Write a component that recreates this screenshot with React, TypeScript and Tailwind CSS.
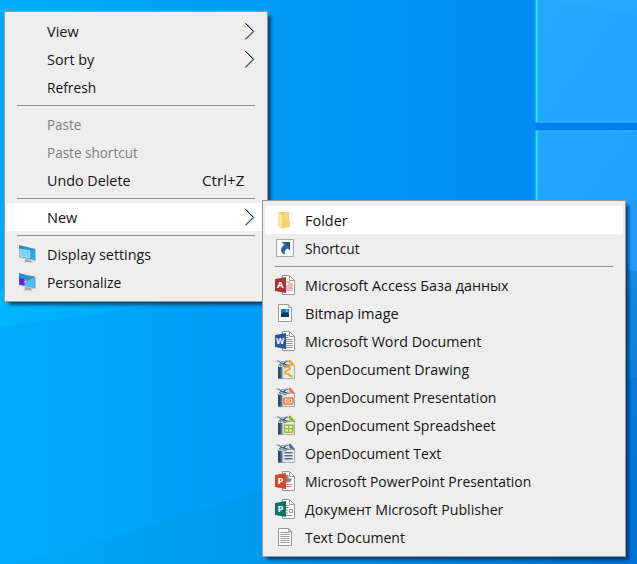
import { useLayoutEffect, useRef, useState, type ReactNode } from "react";

function Label({ text, width }: { text: string; width: number }) {
  const ref = useRef<HTMLSpanElement>(null);
  const [scale, setScale] = useState(1);
  useLayoutEffect(() => {
    if (ref.current) setScale(width / ref.current.offsetWidth);
  }, [width, text]);
  return (
    <span ref={ref} className="inline-block origin-left whitespace-nowrap" style={{ transform: `scaleX(${scale})` }}>
      {text}
    </span>
  );
}

function Row({ text, width, icon, active, disabled, children }: {
  text: string; width: number; icon?: ReactNode; active?: boolean; disabled?: boolean; children?: ReactNode;
}) {
  return (
    <div className={`mx-[2px] flex h-7 items-center pl-[10px] ${active ? "bg-white" : ""} ${disabled ? "text-[#808080]" : "text-[#151515]"}`}>
      <div className="mr-[10px] size-5 shrink-0">{icon}</div>
      <div className="flex-1"><Label text={text} width={width} /></div>
      {children}
    </div>
  );
}

const Separator = () => <div className="mx-3 mt-1 mb-1 h-px bg-[#919191]" />;

const Arrow = () => (
  <svg className="mr-[9px] h-[19px] w-3 shrink-0" viewBox="0 0 12 19" fill="none">
    <path d="M1.8 3.5l5.7 5.8-5.7 5.8" stroke="#fbf3c8" strokeWidth="1.4" />
    <path d="M2 1.2l8.1 8.1L2 17.4" stroke="#3c9be4" strokeWidth="1" />
    <path d="M1.3 1.3l8 8-8 8" stroke="#1b1424" strokeWidth="1" />
  </svg>
);

function Monitor({ paint }: { paint?: boolean }) {
  return (
    <svg viewBox="0 0 20 20" className="size-5">
      <defs>
        <linearGradient id="screen" x1="0" y1="0" x2="1" y2="1"><stop stopColor="#1688d4" /><stop offset="1" stopColor="#20b6f7" /></linearGradient>
      </defs>
      <path d="M8 14.5l6 1.5v1.5l2 .8-3 .9-7-1.2 2-1z" fill="#9ba9b2" />
      <path d="M7 17.6l5 .5 3 .3-3 .6-5-1z" fill="#dbe1e4" />
      <path d="M2 1l16.4 4v12.2L2 13.6z" fill="#6b8797" />
      <path d="M2.4 1.8L17.6 5.6v10L2.4 12.4z" fill="url(#screen)" />
      {paint ? (
        <>
          <path d="M2.4 6.2l4 .6 2 3-1 3.7-5-1.1z" fill="#7418df" />
          <path d="M9 9.2l8.6-4v10.4L7 13.4z" fill="#4cbefa" />
          <path d="M19.3 2.6L9.6 9.4 6 10.4 9 8z" fill="#68727b" />
          <path d="M6 10.2l3-2 1.6 1-2 1.6z" fill="#b8c4cd" />
        </>
      ) : (
        <path d="M2.9 5l9.8 2v6.9l-9.8-2z" fill="#7fcef8" stroke="#c9ecff" strokeWidth=".7" />
      )}
      <path d="M2 13.2l16.2 3.5" stroke="#d5dee3" strokeWidth=".9" />
    </svg>
  );
}

const FolderIcon = () => (
  <svg viewBox="0 0 20 20" className="size-5">
    <path d="M3 2h9v15H4z" fill="#efcb68" />
    <path d="M8 2h6v13h-6z" fill="#f6d779" />
    <path d="M3 2l4 3v14l-4-3z" fill="#ffe7a0" />
    <path d="M7 5v14l6-2h2v-6l-1-1V2h-1v11z" fill="#f5d170" />
  </svg>
);

const ShortcutIcon = () => (
  <svg viewBox="0 0 20 20" className="size-5">
    <path d="M1.5 1.5h17v17h-17z" fill="#f7f8fa" stroke="#a4a9af" />
    <path d="M6.5 4H15v8.6l-2.6-2.2c-2.6 1.5-3.2 3.6-2.2 6.1C5 15 4.6 10.4 9.2 6.8z" fill="#2f62a5" />
    <path d="M9 4h6v6z" fill="#244f8b" />
  </svg>
);

function OfficeIcon({ kind }: { kind: "A" | "W" | "P" | "Pub" }) {
  const color = { A: "#a4373a", W: "#2b579a", P: "#d24726", Pub: "#077568" }[kind];
  return (
    <svg viewBox="0 0 20 20" className="size-5">
      <path d="M7.5 .5h7l5 5v14h-12z" fill="#fff" stroke="#999" />
      <path d="M14.5.5v5h5" fill="none" stroke="#999" />
      {kind === "A" && <path d="M11 7h3v2h3v2h-6M11 13h6v2h-6" fill="none" stroke="#eda0a5" strokeWidth="1.4" />}
      {kind === "W" && <path d="M11 4.5h2.5M11 6.5h2.5M11 8.5h6.5M11 10.5h6.5M11 12.5h6.5M11 14.5h6.5M11 16.5h6.5" stroke="#8793a0" />}
      {kind === "P" && <g fill="#858585"><path d="M11 4h2.5v3.5h3.5c0 2.7-2 4-6 4z" /><path d="M11 13h6v1h-6zm0 2h6v1h-6z" fill="#eb8069" /></g>}
      {kind === "Pub" && <g fill="none" stroke="#8b9696"><path d="M11 6.5h2.5M11 8.5h2.5M11 16.5h6M14.5 10.5h3v3h-3zM11 11.5h2M11 14h2" /></g>}
      <path d="M0 4l11-2v16L0 16z" fill={color} />
      <text x={kind === "W" ? "5.2" : "5.4"} y="13.2" textAnchor="middle" fill="#fff" fontSize={kind === "W" ? "8.5" : "9.5"} fontWeight="700" fontFamily="Open Sans, sans-serif">{kind === "Pub" ? "P" : kind}</text>
    </svg>
  );
}

const ImageIcon = () => (
  <svg viewBox="0 0 20 20" className="size-5">
    <path d="M3.5 1.5h9.8l3.2 3.2v13.8h-13z" fill="#fafafa" stroke="#999" />
    <path d="M13.3 1.5v3.2h3.2" fill="none" stroke="#aaa" />
    <path d="M6 6h8v8H6z" fill="#1478c8" />
    <path d="M6 11l3-2 2 1 1-1 2 2v3H6z" fill="#12345e" />
    <circle cx="11.7" cy="7.8" r="1.2" fill="#55c8ff" />
  </svg>
);

function OpenDocumentIcon({ kind }: { kind: "draw" | "slide" | "sheet" | "text" }) {
  const color = { draw: "#f6a817", slide: "#f27332", sheet: "#86b915", text: "#4c6b85" }[kind];
  return (
    <svg viewBox="0 0 20 20" className="size-5">
      <path d="M5.5 2.5h9.5l4.5 5v12h-14z" fill="#e6ebed" stroke="#a5b0b6" />
      <path d="M3 8h4.5v11.5H3z" fill="#56738c" />
      <path d="M3 8h2.5v11.5H3z" fill="#2c4a66" />
      <path d="M8 7v12" stroke="#b5c3cc" />
      <path d="M14 .8h1.5L19.8 6v1.5L14.5 5z" fill={color} />
      <path d="M.5 2C3 .8 5.5 1.6 7.5 3.8 9.5 1 12.5.4 15 2c-3 0-4.5 1.3-5.5 3.3 2.5-.8 5.5-.3 7.5 1.9-3-1.1-5.5-.3-7 1.3C8 6.2 5.5 6.2 3 8c0-2 1-3 3-3.3C4 3 2.5 2.3.5 2z" fill="#40596c" />
      <path d="M1 2C3 1.2 5.5 2.2 7.5 4M8 4C9.5 1.8 12 1.1 14 1.8M3.5 7C6 5.1 8 5.4 10 7.2c2-1.5 4-1.6 5.5-1" fill="none" stroke="#d3dee4" strokeWidth="1" />
      {kind === "draw" && <path d="M9 9.2c3-2 6-1.8 5.8.2-.2 2-4.8 1.7-4.8 4.2 0 2 2.5.8 3.6 1.5 1.5 1-.5 2.4 4.4 2" fill="none" stroke="#f4a61b" strokeWidth="1.9" />}
      {kind === "slide" && <g fill="none" stroke="#f17835"><rect x="9" y="11" width="9" height="6" rx="1" strokeWidth="1.6" /><path d="M11.5 13h4v2h-4z" /></g>}
      {kind === "sheet" && <g><path d="M9 9.5h9.5V18H9z" fill="#94bd28" /><path d="M10.3 11h2.8v2.1h-2.8zM14.2 11h2.8v2.1h-2.8zM10.3 14.5h2.8v2.1h-2.8zM14.2 14.5h2.8v2.1h-2.8z" fill="#eff3d9" /></g>}
      {kind === "text" && <path d="M9.5 9.8h8M9.5 12.8h8M9.5 15.8h8" stroke="#527089" strokeWidth="1.4" />}
    </svg>
  );
}

const TextIcon = () => (
  <svg viewBox="0 0 20 20" className="size-5">
    <path d="M3.5 1.5h10l3 3v14h-13z" fill="#fafafa" stroke="#969696" />
    <path d="M13.5 1.5v3h3M5.5 5.5h9M5.5 7.5h9M5.5 9.5h9M5.5 11.5h9M5.5 13.5h9M5.5 15.5h9" fill="none" stroke="#a0a0a0" />
  </svg>
);

const Wallpaper = () => (
  <svg className="absolute inset-0" width="637" height="564" viewBox="0 0 637 564">
    <defs>
      <linearGradient id="sky"><stop stopColor="#00adfd" /><stop offset=".41" stopColor="#009cf6" /><stop offset=".84" stopColor="#008cf4" /><stop offset="1" stopColor="#0082e9" /></linearGradient>
      <linearGradient id="floor"><stop stopColor="#00abf8" /><stop offset=".41" stopColor="#0098ee" /><stop offset="1" stopColor="#0070d8" /></linearGradient>
      <linearGradient id="beam"><stop stopColor="#00b4ff" /><stop offset="1" stopColor="#00a8fc" /></linearGradient>
      <linearGradient id="pane" x2=".5" y2="1"><stop stopColor="#25aaff" /><stop offset="1" stopColor="#1f9fff" /></linearGradient>
      <linearGradient id="side" x2="0" y2="1"><stop stopColor="#128ceb" /><stop offset="1" stopColor="#006fd6" /></linearGradient>
    </defs>
    <path d="M0 0h637v564H0z" fill="url(#sky)" />
    <path d="M0 290h210L150 306 0 327z" fill="url(#beam)" />
    <path d="M10 564l90-23 162-51 375-90v164z" fill="url(#floor)" />
    <path d="M536 0h101v122H536zM536 131h101v150H536z" fill="url(#pane)" />
    <path d="M545 0l92 13V0z" fill="#32b0ff" opacity=".35" />
    <path d="M536 122.5h101v8H536z" fill="#0080ed" />
    <path d="M536 122h101M536 131h101" stroke="#35aefb" strokeWidth="1.5" />
    <path d="M535 0v122M535 131v150" stroke="#0eafe2" />
    <path d="M536.7 0v122M536.7 131v150" stroke="#31dcfa" strokeWidth="2" />
    <path d="M626 269l11 2v293h-11z" fill="url(#side)" />
    <path d="M626 379l11-2v187h-11z" fill="#0076de" opacity=".5" />
  </svg>
);

const panel = "absolute border border-[#999] bg-[#eee] py-[5px] px-0 shadow-[4px_4px_3px_-1px_rgba(0,35,65,0.7)]";

export default function App() {
  return (
    <main className="relative h-[564px] w-[637px] overflow-hidden font-['Open_Sans','Noto_Sans',sans-serif] text-[15px] leading-7">
      <Wallpaper />
      <section className={`${panel} top-[11px] left-1 h-[291px] w-[264px]`}>
        <Row text="View" width={32}><Arrow /></Row>
        <Row text="Sort by" width={47}><Arrow /></Row>
        <Row text="Refresh" width={49.5} />
        <Separator />
        <Row text="Paste" width={34} disabled />
        <Row text="Paste shortcut" width={91} disabled />
        <Row text="Undo Delete" width={84}><div className="w-[63px]"><Label text="Ctrl+Z" width={42.5} /></div></Row>
        <Separator />
        <Row text="New" width={30} active><Arrow /></Row>
        <Separator />
        <Row text="Display settings" width={104} icon={<Monitor />} />
        <Row text="Personalize" width={74} icon={<Monitor paint />} />
      </section>
      <section className={`${panel} top-[200px] left-[262px] h-[357px] w-[364px]`}>
        <Row text="Folder" width={42.5} icon={<FolderIcon />} active />
        <Row text="Shortcut" width={55} icon={<ShortcutIcon />} />
        <Separator />
        <Row text="Microsoft Access База данных" width={203.7} icon={<OfficeIcon kind="A" />} />
        <Row text="Bitmap image" width={94} icon={<ImageIcon />} />
        <Row text="Microsoft Word Document" width={176} icon={<OfficeIcon kind="W" />} />
        <Row text="OpenDocument Drawing" width={164.5} icon={<OpenDocumentIcon kind="draw" />} />
        <Row text="OpenDocument Presentation" width={191.5} icon={<OpenDocumentIcon kind="slide" />} />
        <Row text="OpenDocument Spreadsheet" width={191} icon={<OpenDocumentIcon kind="sheet" />} />
        <Row text="OpenDocument Text" width={136} icon={<OpenDocumentIcon kind="text" />} />
        <Row text="Microsoft PowerPoint Presentation" width={226.3} icon={<OfficeIcon kind="P" />} />
        <Row text="Документ Microsoft Publisher" width={198} icon={<OfficeIcon kind="Pub" />} />
        <Row text="Text Document" width={100} icon={<TextIcon />} />
      </section>
    </main>
  );
}
